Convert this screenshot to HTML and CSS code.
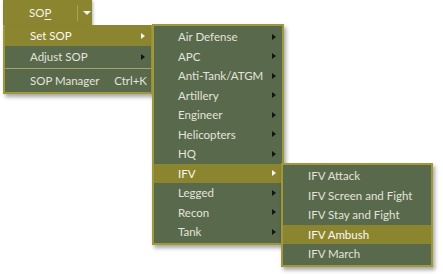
FILE: index.html
```html
<!DOCTYPE html>
<html lang="en">
<head>
  <meta charset="UTF-8">
  <title>SOP Menu</title>
  <link rel="stylesheet" href="styles.css">
</head>
<body>
  <div class="menu-area">
    <div class="sop-button">
      <span class="sop-label">SO<u>P</u></span>
      <span class="sop-divider"></span>
      <span class="sop-drop"></span>
    </div>

    <div class="menu main-menu">
      <div class="item active">Set SOP<span class="arrow"></span></div>
      <div class="item">Adjust SOP<span class="arrow"></span></div>
      <div class="separator"></div>
      <div class="item">SOP Manager<span class="shortcut">Ctrl+K</span></div>
    </div>

    <div class="menu sub-menu">
      <div class="item">Air Defense<span class="arrow"></span></div>
      <div class="item">APC<span class="arrow"></span></div>
      <div class="item">Anti-Tank/ATGM<span class="arrow"></span></div>
      <div class="item">Artillery<span class="arrow"></span></div>
      <div class="item">Engineer<span class="arrow"></span></div>
      <div class="item">Helicopters<span class="arrow"></span></div>
      <div class="item">HQ<span class="arrow"></span></div>
      <div class="item active">IFV<span class="arrow"></span></div>
      <div class="item">Legged<span class="arrow"></span></div>
      <div class="item">Recon<span class="arrow"></span></div>
      <div class="item">Tank<span class="arrow"></span></div>
    </div>

    <div class="menu ifv-menu">
      <div class="item">IFV Attack</div>
      <div class="item">IFV Screen and Fight</div>
      <div class="item">IFV Stay and Fight</div>
      <div class="item active">IFV Ambush</div>
      <div class="item">IFV March</div>
    </div>
  </div>
</body>
</html>
```

FILE: styles.css
```css
body {
  margin: 0;
  background-color: white;
  font-family: Lato, "Open Sans", sans-serif;
  font-size: 11.5px;
  color: #e4e4da;
}

.menu-area {
  position: relative;
  width: 443px;
  height: 274px;
  padding-left: 3px;
}

.sop-button {
  display: flex;
  align-items: center;
  width: 89px;
  height: 25px;
  background-color: #8c8530;
  box-shadow: 1px 1px 3px rgba(0, 0, 0, 0.3);
}

.sop-label {
  margin-left: 26px;
  width: 48px;
  color: #f4f4ea;
}

.sop-label u {
  text-decoration-thickness: 1px;
  text-underline-offset: 2px;
}

.sop-divider {
  width: 1px;
  height: 16px;
  background-color: #a9a35a;
}

.sop-drop {
  margin-left: 5px;
  border-left: 4px solid transparent;
  border-right: 4px solid transparent;
  border-top: 4px solid #f4f4f4;
}

.menu {
  background-color: #58694c;
  border: 2px solid #9e9838;
  box-shadow: 2px 3px 4px rgba(0, 0, 0, 0.35);
}

.item {
  display: flex;
  align-items: center;
  height: 19.5px;
  padding-left: 24px;
  padding-right: 8px;
}

.item.active {
  background-color: #8c8530;
  color: #fafaf2;
}

.arrow {
  margin-left: auto;
  border-top: 3.5px solid transparent;
  border-bottom: 3.5px solid transparent;
  border-left: 4px solid #141414;
}

.item.active .arrow {
  border-left-color: #f4f4f4;
}

.shortcut {
  margin-left: auto;
}

.main-menu {
  width: 146px;
  padding: 0 0 1px;
  border-top: none;
}

.main-menu .item {
  height: 21px;
  padding-left: 25px;
  padding-right: 4px;
}

.main-menu .item .arrow {
  margin-right: 2px;
}

.separator {
  height: 1px;
  background-color: #a8a26a;
  margin: 1px 0 1px;
}

.sub-menu {
  position: absolute;
  left: 152px;
  top: 24px;
  width: 128px;
  padding: 1px 0;
}

.sub-menu .item {
  padding-right: 6px;
}

.ifv-menu {
  position: absolute;
  left: 281px;
  top: 163px;
  width: 148px;
  padding: 1px 0;
}

.ifv-menu .item {
  padding-left: 25px;
}
```
